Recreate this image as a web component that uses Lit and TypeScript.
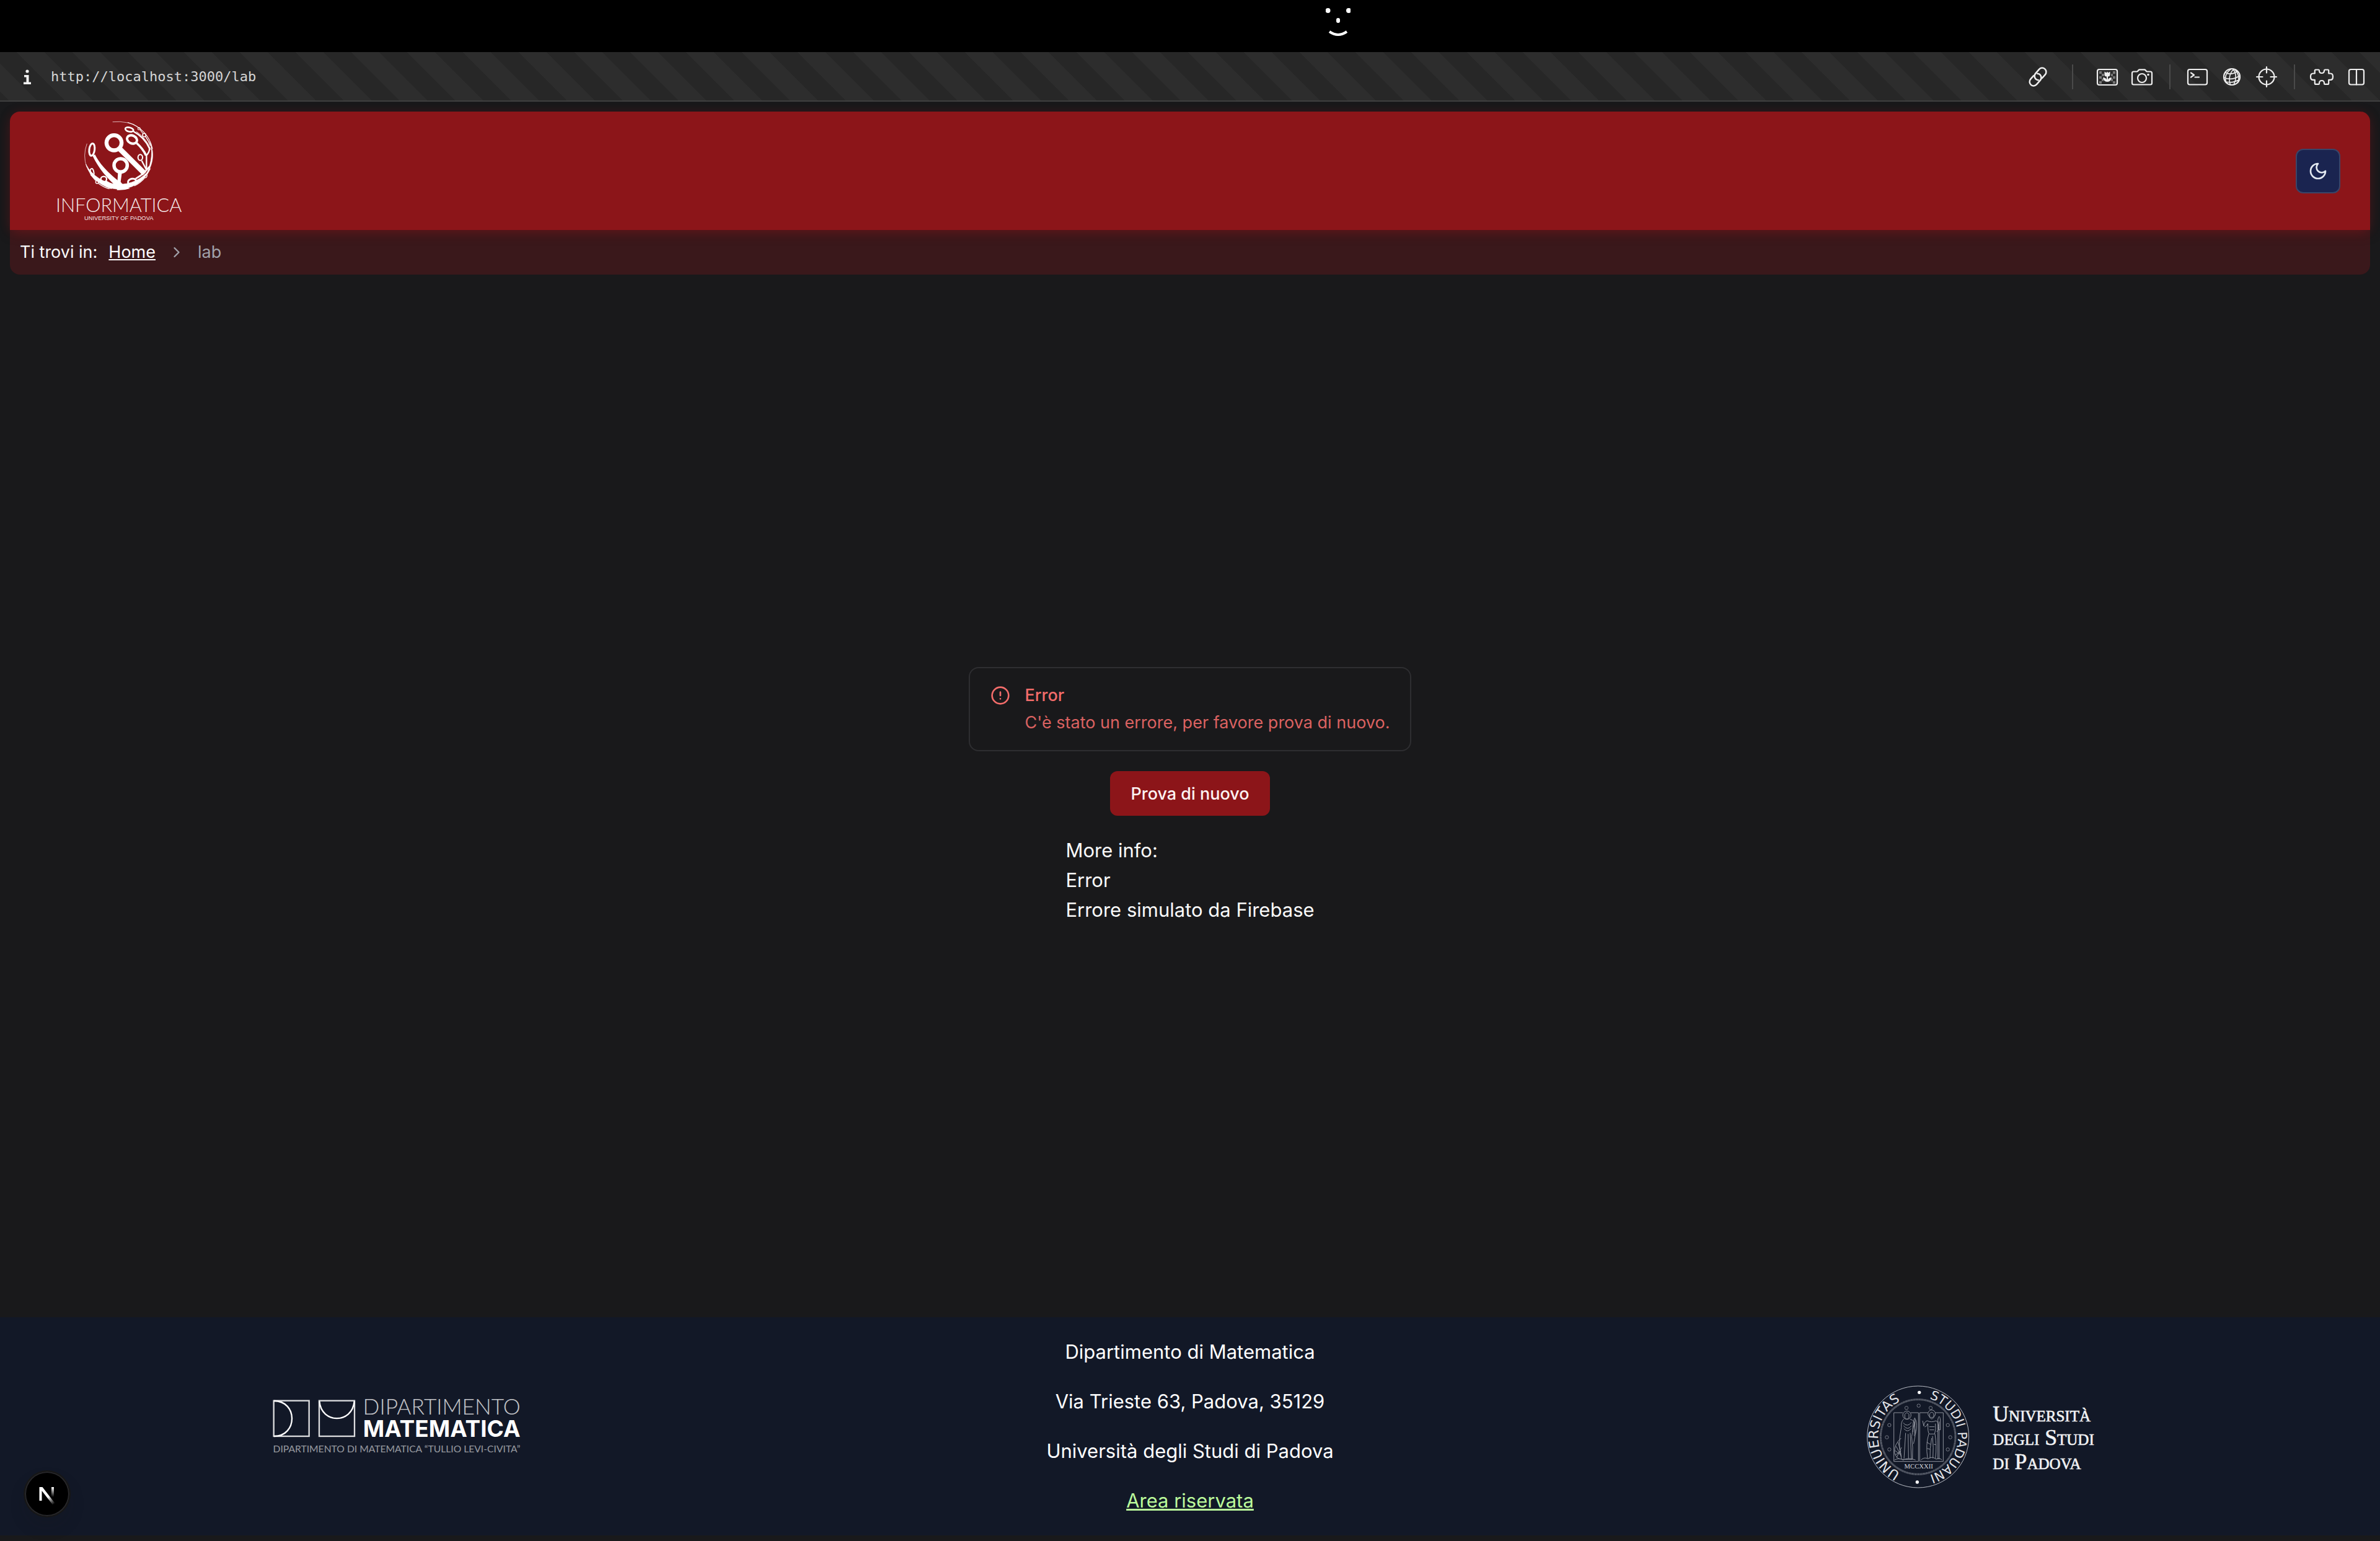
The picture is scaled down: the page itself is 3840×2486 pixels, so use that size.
import { LitElement, html, css, svg } from "lit";
import { customElement, property } from "lit/decorators.js";

const ICONS: Record<string, { label: string; art: unknown }> = {
  link: {
    label: "Copy link",
    art: svg`<g transform="translate(28 28) rotate(-49)" stroke-width="2.500">
      <path d="M-3-6.500H-10.500a6.500 6.500 0 0 0 0 13H-1.500a6.500 6.500 0 0 0 5-10.500"/>
      <path d="M3 6.500H10.500a6.500 6.500 0 0 0 0-13H1.500a6.500 6.500 0 0 0-5 10.500"/>
    </g>`,
  },
  flower: {
    label: "Images",
    art: svg`<g fill="#777" stroke="none">
        <path d="M15 19h4v4h-4zM19 23h4v4h-4zM15 27h4v4h-4zM19 31h3v4h-3zM15 35h4v4h-4zM37 19h4v4h-4zM34 23h3v4h-3zM37 27h4v4h-4zM34 31h3v4h-3zM37 35h4v4h-4z"/>
      </g>
      <rect x="12" y="16" width="32" height="25" rx="3"/>
      <path d="M23.500 19.500l3 2 1.500-2 1.500 2 3-2v4.500q0 3.500-3.500 3.500v5q1.500-3.500 6-3.500-.5 6.500-7 7-6.500-.5-7-7 4.500 0 6 3.500v-5q-3.500 0-3.500-3.500z" fill="#eee" stroke="none"/>`,
  },
  camera: {
    label: "Screenshot",
    art: svg`<path d="M14.500 19.500h5q1.200 0 2-1.200l.8-1q.7-1 2-1h7.400q1.300 0 2 1l.8 1q.8 1.200 2 1.200h5q2.500 0 2.500 2.500v16q0 2.500-2.500 2.500h-27q-2.500 0-2.500-2.500v-16q0-2.500 2.500-2.500z"/>
      <circle cx="28" cy="30" r="7"/><circle cx="38" cy="24.500" r="1.800" fill="#eee" stroke="none"/>`,
  },
  terminal: {
    label: "Console",
    art: svg`<rect x="13" y="16" width="31" height="24.500" rx="3"/><path d="M18 21.500l5 3.500-5 3.500M24.500 28.500h6.500"/>`,
  },
  globe: {
    label: "Network",
    art: svg`<circle cx="28" cy="28" r="13"/>
      <path d="M31 15.500q-10 10-5.500 25.500M30 15.500q8 11 1 25M27 15.200q-13 9-8 22M33 16.500q9 9 4.500 21M17.500 21q9 5 19.500-2M15 29q12 6 26-3M18 36q11 2.500 21-3" stroke-width="1.600"/>`,
  },
  target: {
    label: "Inspect",
    art: svg`<circle cx="28" cy="28" r="12.500"/><path d="M28 12v9.500M28 34.500v9.500M12 28h9.500M34.500 28h9.500"/>`,
  },
  puzzle: {
    label: "Extensions",
    art: svg`<path d="M18 16.500h5q1 0 1 1.500 0 4 4 4t4-4q0-1.500 1-1.500h5q1.200 0 1.200 1.500v4.500h2.800q4 0 4 5.200t-4 5.200h-2.800v5q0 2-1.200 2h-5q-1 0-1-1.500 0-4.400-4-4.400t-4 4.400q0 1.500-1 1.500h-5q-1.200 0-1.200-2v-5h-2.800q-4 0-4-5.200t4-5.200h2.800v-4.500q0-1.500 1.200-1.500z"/>`,
  },
  columns: {
    label: "Split view",
    art: svg`<rect x="16" y="16" width="24" height="24.500" rx="3"/><path d="M28 16v24.500"/>`,
  },
};

@customElement("tool-icon")
class ToolIcon extends LitElement {
  @property() name = "link";
  static styles = css`
    :host { display: block; }
    button { display: block; padding: 0; border: 0; background: none; cursor: pointer; }
    svg { display: block; width: 56px; height: 56px; fill: none; stroke: #eee; stroke-width: 2.2; stroke-linecap: round; stroke-linejoin: round; }
  `;
  render() {
    const icon = ICONS[this.name];
    return html`<button aria-label=${icon.label}><svg viewBox="0 0 56 56">${icon.art}</svg></button>`;
  }
}

@customElement("browser-bar")
class BrowserBar extends LitElement {
  static styles = css`
    :host { display: block; }
    .notch { height: 84px; background: #000; padding-left: calc(50% + 219px); box-sizing: border-box; }
    .notch svg { display: block; width: 40px; height: 64px; }
    .bar {
      display: flex; align-items: center; height: 80px; box-sizing: border-box;
      padding: 2px 10px 0 16px; border-bottom: 2px solid #404040;
      background: linear-gradient(45deg, #2d2d2d 25%, #272727 25% 50%, #2d2d2d 50% 75%, #272727 75%) 27px 0 / 90px 90px;
    }
    .info { display: block; padding: 0; border: 0; background: none; margin-right: 10px; }
    .info svg { display: block; width: 56px; height: 56px; }
    .url {
      flex: 1; min-width: 0; padding: 0; border: 0; outline: 0; background: none; color: #d6d6d6;
      font: 22px/32px "DejaVu Sans Mono", monospace;
    }
    .sep { width: 2px; height: 40px; margin: 0 15px 0 16px; background: #4a4a4a; }
    .wide { margin: 0 27px; }
  `;
  render() {
    return html`
      <div class="notch">
        <svg viewBox="0 0 40 64" aria-hidden="true">
          <g fill="#fff"><circle cx="3.500" cy="17" r="4"/><circle cx="37" cy="17" r="4"/><rect x="17" y="29" width="6" height="8" rx="3"/></g>
          <path d="M6 51q14 10 28 0" fill="none" stroke="#fff" stroke-width="4"/>
        </svg>
      </div>
      <div class="bar">
        <button class="info" aria-label="Site information">
          <svg viewBox="0 0 56 56" fill="#f2f2f2"><circle cx="28" cy="19" r="2.600"/><path d="M23 25h7.500v11.500h3.500v3.500h-12v-3.500h4.500v-8h-3.500z"/></svg>
        </button>
        <input class="url" aria-label="Address" value="http://localhost:3000/lab" />
        <tool-icon name="link"></tool-icon>
        <span class="sep wide"></span>
        <tool-icon name="flower"></tool-icon><tool-icon name="camera"></tool-icon>
        <span class="sep"></span>
        <tool-icon name="terminal"></tool-icon><tool-icon name="globe"></tool-icon><tool-icon name="target"></tool-icon>
        <span class="sep"></span>
        <tool-icon name="puzzle"></tool-icon><tool-icon name="columns"></tool-icon>
      </div>`;
  }
}

@customElement("site-header")
class SiteHeader extends LitElement {
  static styles = css`
    :host { display: block; padding: 16px 16px 0; }
    header {
      position: relative; display: flex; align-items: center; justify-content: space-between;
      padding: 0 48px; background: #8c1519; border-radius: 16px 16px 0 0;
      box-shadow: 0 6px 20px -4px rgba(140, 21, 25, 0.5), 0 0 20px rgba(140, 21, 25, 0.1);
    }
    .logo, .logo svg { display: block; }
    .logo svg { width: 252px; height: 191px; }
    .theme {
      display: grid; place-items: center; width: 72px; height: 72px; padding: 0; box-sizing: border-box;
      border: 2px solid #3a4568; border-radius: 12px; background: #1a2450; color: #e2e8f0;
    }
    .theme svg { width: 32px; height: 32px; }
    nav {
      display: flex; align-items: center; height: 72px; padding: 0 16px;
      background: #3a181b; border-radius: 0 0 16px 16px; font-size: 27px; line-height: 40px;
    }
    ol { display: flex; align-items: center; gap: 20px; margin: 0 0 0 18px; padding: 0; list-style: none; }
    li { display: flex; }
    li svg { width: 28px; height: 28px; color: #a1a1aa; }
    a { color: #fff; }
    .here { color: #a1a1aa; }
  `;
  render() {
    return html`
      <header>
        <a class="logo" href="/" aria-label="Informatica">
          <svg viewBox="12 0 756 573" fill="none" stroke="#fff">
            <path d="M365 50Q400 46 440 54" stroke-width="2"/>
            <path d="M438 53A166 166 0 0 1 558 180" stroke-width="3.500"/>
            <path d="M545 145C566 190 566 250 530 300C556 240 560 190 545 145z" fill="#fff" stroke-width="2"/>
            <path d="M241 155A166 166 0 0 0 240 270" stroke-width="2"/>
            <path d="M236 255A166 166 0 0 0 548 275A182 178 0 0 1 236 255z" fill="#fff" stroke-width="2"/>
            <circle cx="372" cy="151" r="36.500" stroke-width="19"/>
            <path d="M399 180L520 300" stroke-width="25"/>
            <circle cx="404" cy="260" r="32" stroke-width="16.500"/>
            <path d="M391 296H410L404 340L420 362L450 372Q420 382 386 380Z" fill="#fff" stroke="none"/>
            <ellipse cx="265" cy="184" rx="13" ry="30" stroke-width="9" transform="rotate(7 265 184)"/>
            <path d="M268 214L280 208C300 250 350 310 440 368L400 376C330 320 290 260 268 214z" fill="#fff" stroke="none"/>
            <ellipse cx="459" cy="135" rx="25" ry="19" stroke-width="12" transform="rotate(25 459 135)"/>
            <path d="M482 153Q512 180 527 212" stroke-width="11"/>
            <ellipse cx="446" cy="87" rx="20" ry="10" stroke-width="8" transform="rotate(14 446 87)"/>
            <path d="M466 96Q520 125 543 178Q545 195 529 212V285" stroke-width="7"/>
            <path d="M480 97Q530 130 550 185" stroke-width="3"/>
            <ellipse cx="499" cy="222" rx="11" ry="14" stroke-width="6"/>
            <path d="M506 238L529 282" stroke-width="7"/>
            <circle cx="518" cy="114" r="8" stroke-width="4.500"/><path d="M524 120Q538 140 548 165" stroke-width="4"/>
            <circle cx="493" cy="83" r="5.500" stroke-width="3.500"/><path d="M497 87L512 106" stroke-width="3.500"/>
            <ellipse cx="459" cy="339" rx="20" ry="14" stroke-width="9" transform="rotate(-14 459 339)"/>
            <path d="M476 325Q500 312 520 293L545 265" stroke-width="8"/>
            <ellipse cx="525" cy="312" rx="6" ry="9" stroke-width="4" transform="rotate(25 525 312)"/>
            <path d="M470 360Q500 345 520 322M531 304L546 278" stroke-width="4"/>
            <ellipse cx="266" cy="293" rx="8" ry="17" stroke-width="6" transform="rotate(-12 266 293)"/>
            <path d="M272 310Q300 350 360 372" stroke-width="7"/>
            <ellipse cx="322" cy="327" rx="14" ry="13" stroke-width="7"/>
            <path d="M333 338Q365 358 400 366" stroke-width="8"/>
            <circle cx="290" cy="341" r="7" stroke-width="4"/><path d="M296 347Q320 366 350 374M258 305L284 335" stroke-width="4"/>
            <g fill="#fff" stroke="none" text-anchor="middle">
              <text x="395" y="486" font-family="Lato, sans-serif" font-weight="300" font-size="92" opacity="0.9">INFORMATICA</text>
              <text x="395" y="525" font-family="'Liberation Sans', sans-serif" font-size="28" opacity="0.9">UNIVERSITY OF PADOVA</text>
            </g>
          </svg>
        </a>
        <button class="theme" aria-label="Cambia tema">
          <svg viewBox="0 0 24 24" fill="none" stroke="currentColor" stroke-width="2" stroke-linecap="round" stroke-linejoin="round"><path d="M12 3a6 6 0 0 0 9 9 9 9 0 1 1-9-9Z"/></svg>
        </button>
      </header>
      <nav aria-label="breadcrumb">
        <span>Ti trovi in:</span>
        <ol>
          <li><a href="/">Home</a></li>
          <li aria-hidden="true"><svg viewBox="0 0 24 24" fill="none" stroke="currentColor" stroke-width="2" stroke-linecap="round" stroke-linejoin="round"><path d="m9 18 6-6-6-6"/></svg></li>
          <li class="here" aria-current="page">lab</li>
        </ol>
      </nav>`;
  }
}

@customElement("error-panel")
class ErrorPanel extends LitElement {
  static styles = css`
    :host { flex: 1; display: flex; flex-direction: column; align-items: center; justify-content: center; gap: 32px; }
    .alert {
      display: grid; grid-template-columns: 32px auto; column-gap: 24px; row-gap: 4px;
      padding: 24px 33px; border: 2px solid #2e2e31; border-radius: 16px;
      font-size: 27px; line-height: 40px; color: #f26c6a;
    }
    .alert svg { width: 32px; height: 32px; margin-top: 4px; }
    h2, p { margin: 0; font-size: inherit; }
    h2 { font-weight: 500; }
    .alert p { grid-column: 2; color: #db6261; }
    button {
      height: 72px; padding: 0 33px; border: 0; border-radius: 12px; background: #8c1519;
      color: #fdf2f2; font: inherit; font-size: 27px; font-weight: 500;
    }
    .info { line-height: 48px; }
  `;
  render() {
    return html`
      <div class="alert" role="alert">
        <svg viewBox="0 0 24 24" fill="none" stroke="currentColor" stroke-width="2" stroke-linecap="round" stroke-linejoin="round"><circle cx="12" cy="12" r="10"/><path d="M12 8v4M12 16h.01"/></svg>
        <h2>Error</h2>
        <p>C'è stato un errore, per favore prova di nuovo.</p>
      </div>
      <button>Prova di nuovo</button>
      <div class="info">
        <p>More info:</p>
        <p>Error</p>
        <p>Errore simulato da Firebase</p>
      </div>`;
  }
}

const STARS = [[258, 184], [317, 173], [375, 184], [175, 267], [163, 326], [175, 385], [458, 267], [470, 326], [458, 385]];

@customElement("site-footer")
class SiteFooter extends LitElement {
  static styles = css`
    :host { display: block; }
    footer {
      display: grid; grid-template-columns: repeat(3, 1fr); align-items: center; justify-items: center;
      padding: 32px 0; margin-bottom: 9px; background: #121827; color: #fff;
    }
    .text { display: flex; flex-direction: column; align-items: center; gap: 32px; line-height: 48px; }
    p { margin: 0; }
    a { color: #bbfb9c; }
    svg { display: block; }
    .math { width: 440px; height: 130px; }
    .uni { width: 420px; height: 210px; }
  `;
  render() {
    return html`
      <footer>
        <svg class="math" viewBox="0 18 1320 390" fill="none" stroke="#fff" role="img" aria-label="Dipartimento di Matematica">
          <g stroke-width="7" opacity="0.85"><rect x="65" y="89" width="171" height="172"/><rect x="285" y="89" width="171" height="172"/></g>
          <g stroke-width="7"><path d="M66 90C182 90 182 261 66 261"/><path d="M286 92C296 202 445 202 455 92"/></g>
          <g fill="#fff" stroke="none" text-anchor="middle">
            <text x="878" y="157" font-family="Lato, sans-serif" font-weight="300" font-size="106" opacity="0.75">DIPARTIMENTO</text>
            <text x="878" y="264" font-family="Inter, sans-serif" font-weight="700" font-size="111">MATEMATICA</text>
            <text x="660" y="339" font-family="Lato, sans-serif" font-size="47" opacity="0.55">DIPARTIMENTO DI MATEMATICA “TULLIO LEVI-CIVITA”</text>
          </g>
        </svg>
        <div class="text">
          <p>Dipartimento di Matematica</p>
          <p>Via Trieste 63, Padova, 35129</p>
          <p>Università degli Studi di Padova</p>
          <a href="/login">Area riservata</a>
        </div>
        <svg class="uni" viewBox="0 -42 1260 630" fill="none" stroke="#b9bcc4" role="img" aria-label="Università degli Studi di Padova">
          <circle cx="314" cy="324" r="246" stroke-width="3"/>
          <circle cx="314" cy="324" r="181" stroke-width="9" stroke-dasharray="3 2" opacity="0.6"/>
          <defs>
            <path id="left" d="M314 517A193 193 0 0 1 314 131"/>
            <path id="right" d="M314 131A193 193 0 0 1 314 517"/>
          </defs>
          <g fill="#e4e5e9" stroke="none" font-family="'DejaVu Sans', sans-serif" font-size="61" text-anchor="middle">
            <text font-size="65"><textPath href="#left" startOffset="50%">UNIUERSITAS</textPath></text>
            <text><textPath href="#right" startOffset="50%">STUDII PADUANI</textPath></text>
          </g>
          <g fill="#fff" stroke="none"><circle cx="320" cy="109" r="8"/><circle cx="310" cy="543" r="8"/></g>
          <g stroke-width="3" opacity="0.6">${STARS.map(([x, y]) => svg`<circle cx=${x} cy=${y} r="8"/>`)}</g>
          <g stroke-width="3" opacity="0.75">
            <path d="M240 207H197V443H316V207H278M322 443V207H362M396 207H436V443H322"/>
            <circle cx="260" cy="219" r="20"/><circle cx="380" cy="212" r="18"/>
            <path d="M250 215q10-16 20 0v16q-10 14-20 0zM370 212q10-14 20 0v18q-10 14-20 0z"/>
            <path d="M245 238q-14 10-12 40l-8 50q-4 60 10 105h52q4-60-4-110l14-70q-10-12-22-15"/>
            <path d="M242 256q20 24 40-2M244 270q20 26 38 0M246 284q16 22 34 0M254 305l-8 125M266 310l2 120M276 305l6 125"/>
            <path d="M288 300q0-50 10-68 12 20 8 50t-14 76M294 250l8 60M300 240l-4 80"/>
            <path d="M232 330q-34 30-32 70 6 26 28 32M208 370l26 50M202 390l32 24M218 350l14 60M204 412l28-20M210 425l24-50"/>
            <path d="M200 436q20-12 42 0 24-14 60 0M328 436q16-16 34-6 20-14 40 2 16-8 28 4"/>
            <path d="M358 246q20 10 44 0 14 10 10 44l-8 10M358 246q-16 6-16 26l-6-26M346 276q12-2 14-16M362 260q-2 40 6 50h26q8-20 4-50M368 275h26M370 290h22"/>
            <path d="M366 310q-16 50-6 118M380 330q-10 50-8 98M384 320q6 60 2 108M396 310q10 60 2 118M356 350l18 10M358 380l14 4M390 360l10 2"/>
            <path d="M410 290V432M416 250V432M410 240q6-30 12 0v50h-12z"/>
          </g>
          <text x="317" y="478" fill="#d4d6db" stroke="none" text-anchor="middle" font-family="'Liberation Serif', serif" font-size="32">MCCXXII</text>
          <g fill="#f0f1f3" stroke="#f0f1f3" stroke-width="2" font-family="'Liberation Serif', serif" font-size="107" font-variant="small-caps">
            <text x="676" y="250">Università</text>
            <text x="676" y="364">degli Studi</text>
            <text x="676" y="479">di Padova</text>
          </g>
        </svg>
      </footer>`;
  }
}

@customElement("app-root")
class AppRoot extends LitElement {
  static styles = css`
    :host {
      display: flex; flex-direction: column; min-height: 100vh; background: #19191b; color: #fafafa;
      font-family: Inter, "Liberation Sans", sans-serif; font-size: 31px;
    }
    .dev {
      position: fixed; left: 40px; bottom: 40px; width: 72px; height: 72px; padding: 0; border: 0;
      border-radius: 50%; background: #000;
      box-shadow: inset 0 0 0 2px #27272a, 0 0 0 2px #171717, 0 16px 32px -8px rgba(24, 24, 27, 0.3);
    }
    .dev svg { display: block; width: 72px; height: 72px; }
  `;
  render() {
    return html`
      <browser-bar></browser-bar>
      <site-header></site-header>
      <error-panel role="main"></error-panel>
      <site-footer></site-footer>
      <button class="dev" aria-label="Open Next.js Dev Tools">
        <svg viewBox="0 0 72 72">
          <defs>
            <linearGradient id="stem" x1="0" y1="25" x2="0" y2="41" gradientUnits="userSpaceOnUse"><stop offset="0" stop-color="#fff"/><stop offset="1" stop-color="#fff" stop-opacity="0"/></linearGradient>
            <linearGradient id="slash" x1="37" y1="41" x2="47" y2="53" gradientUnits="userSpaceOnUse"><stop offset="0" stop-color="#fff"/><stop offset="1" stop-color="#fff" stop-opacity="0"/></linearGradient>
          </defs>
          <path d="M23.500 47V25H28.500L48.500 51L45 53.500L27.500 31V47Z" fill="url(#slash)"/>
          <rect x="43" y="25" width="4" height="16" fill="url(#stem)"/>
        </svg>
      </button>`;
  }
}
